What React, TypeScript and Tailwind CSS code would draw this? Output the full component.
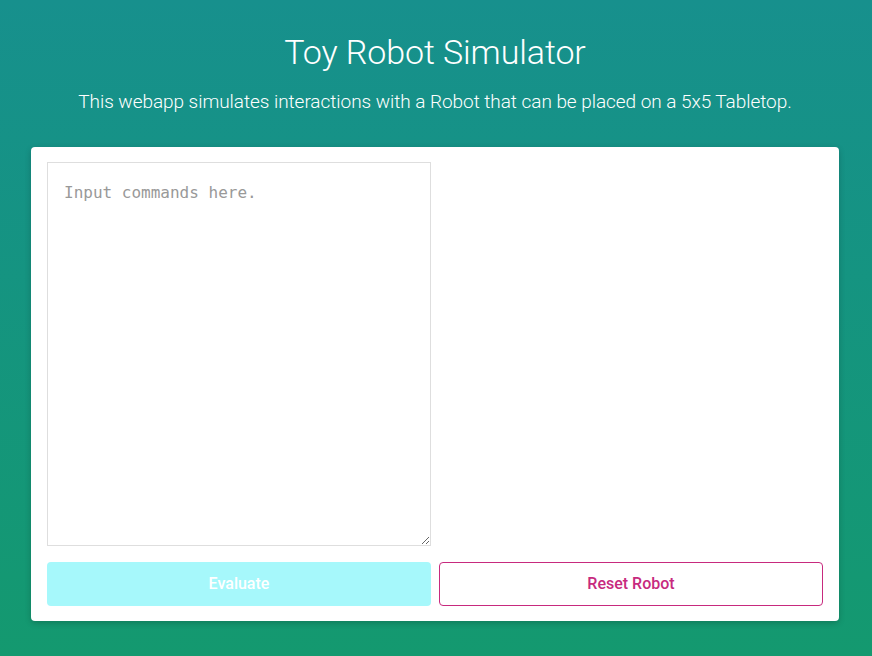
import React from "react";

export default function App() {
  return (
    <div
      className="min-h-[656px] w-full bg-gradient-to-b from-[#17908d] to-[#14996f] flex flex-col items-center pr-[2px]"
      style={{ fontFamily: "Roboto, 'Noto Sans', sans-serif" }}
    >
      <h1 className="mt-[30px] text-[34px] leading-[44px] font-light text-white tracking-[-0.1px]">
        Toy Robot Simulator
      </h1>
      <p className="mt-[16px] text-[19px] leading-[24px] font-light text-white tracking-[-0.05px]">
        This webapp simulates interactions with a Robot that can be placed on a 5x5 Tabletop.
      </p>
      <div className="mt-[33px] w-[808px] bg-white rounded-[4px] shadow-[0_2px_6px_rgba(0,0,0,0.2)] px-[16px] pt-[15px] pb-[15px]">
        <div className="flex gap-[8px]">
          <textarea
            className="w-[384px] h-[384px] border border-[#dedede] rounded-none px-[16px] pt-[20px] text-[16px] leading-[20px] text-[#333] placeholder:text-[#999] outline-none resize"
            style={{ fontFamily: "'DejaVu Sans Mono', 'Liberation Mono', monospace" }}
            placeholder="Input commands here."
          />
          <div className="flex-1" />
        </div>
        <div className="mt-[16px] flex gap-[8px]">
          <button className="w-[384px] h-[44px] rounded-[4px] bg-[#a6f8fb] text-white text-[16px] font-medium">
            Evaluate
          </button>
          <button className="w-[384px] h-[44px] rounded-[4px] border border-[#c72a7e] bg-white text-[#c72a7e] text-[16px] font-medium">
            Reset Robot
          </button>
        </div>
      </div>
    </div>
  );
}
